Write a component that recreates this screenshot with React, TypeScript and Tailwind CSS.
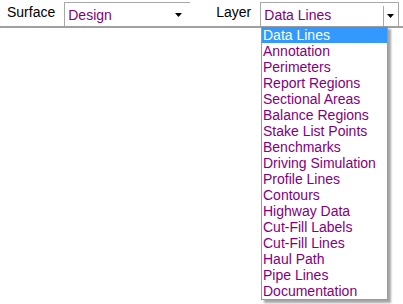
import React from 'react'

const layers = [
  'Data Lines',
  'Annotation',
  'Perimeters',
  'Report Regions',
  'Sectional Areas',
  'Balance Regions',
  'Stake List Points',
  'Benchmarks',
  'Driving Simulation',
  'Profile Lines',
  'Contours',
  'Highway Data',
  'Cut-Fill Labels',
  'Cut-Fill Lines',
  'Haul Path',
  'Pipe Lines',
  'Documentation',
]

function Arrow() {
  return (
    <svg width="7" height="4" viewBox="0 0 7 4" className="block">
      <path d="M0 0h7L3.5 4z" fill="#000" />
    </svg>
  )
}

export default function App() {
  const font = { fontFamily: '"Liberation Sans", Arial, sans-serif' }
  return (
    <div className="w-[403px] h-[304px] bg-white relative overflow-hidden text-[14px]" style={font}>
      <div className="h-[28px] flex items-end border-b-2 border-[#a0a0a0] bg-white">
        <span className="ml-[7px] mb-[7px] leading-none text-black">Surface</span>
        <div className="ml-[9px] w-[126px] h-[24px] border-l border-t border-[#a8a8a8] flex items-center">
          <span className="pl-[3px] text-[#800080] leading-none flex-1">Design</span>
          <span className="mr-[8px]"><Arrow /></span>
        </div>
        <span className="ml-[26px] mb-[7px] leading-none text-black">Layer</span>
        <div className="ml-[9px] w-[139px] h-[24px] border-l border-t border-r border-[#a8a8a8] flex items-center">
          <span className="pl-[3px] text-[#800080] leading-none flex-1">Data Lines</span>
          <div className="h-[20px] w-[14px] mt-[2px] mr-[1px] border-l border-[#a8a8a8] flex items-center justify-center">
            <Arrow />
          </div>
        </div>
      </div>
      <div className="absolute left-[261px] top-[26px] w-[127px] border border-[#9a9a9a] bg-white shadow-[3px_3px_2px_rgba(0,0,0,0.35)]">
        {layers.map((l, i) => (
          <div
            key={l}
            className={
              i === 0
                ? 'h-[16px] leading-[16px] pl-[1px] bg-[#3399ff] text-white'
                : 'h-[16px] leading-[16px] pl-[1px] text-[#800080]'
            }
          >
            {l}
          </div>
        ))}
      </div>
    </div>
  )
}
